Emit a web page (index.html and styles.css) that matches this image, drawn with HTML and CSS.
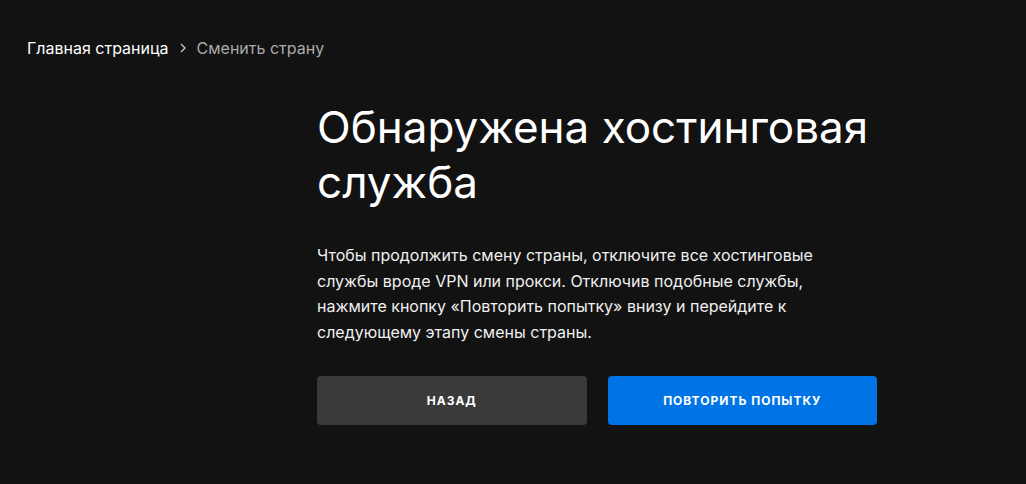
FILE: index.html
```html
<!DOCTYPE html>
<html lang="ru">
<head>
    <meta charset="UTF-8">
    <meta name="viewport" content="width=device-width, initial-scale=1.0">
    <title>Сменить страну</title>
    <link rel="stylesheet" href="styles.css">
</head>
<body>
    <nav class="breadcrumbs">
        <a href="#" class="crumb">Главная страница</a>
        <svg class="chevron" width="12" height="12" viewBox="0 0 12 12"><path d="M4 2 L8 6 L4 10" fill="none" stroke="#ccc" stroke-width="1.3"/></svg>
        <span class="crumb current">Сменить страну</span>
    </nav>

    <div class="content">
        <h1>Обнаружена хостинговая служба</h1>
        <p>Чтобы продолжить смену страны, отключите все хостинговые службы вроде VPN или прокси. Отключив подобные службы, нажмите кнопку «Повторить попытку» внизу и перейдите к следующему этапу смены страны.</p>
        <div class="actions">
            <button class="btn btn-back">Назад</button>
            <button class="btn btn-retry">Повторить попытку</button>
        </div>
    </div>
</body>
</html>
```

FILE: styles.css
```css
body {
    font-family: 'Inter', 'Noto Sans', sans-serif;
    margin: 0;
    background-color: #121212;
    color: white;
}
.breadcrumbs {
    display: flex;
    align-items: center;
    gap: 8px;
    padding: 37px 27px 0;
    font-size: 16px;
    line-height: 22px;
}
.crumb {
    color: white;
    text-decoration: none;
}
.crumb.current {
    color: #aaaaaa;
}
.content {
    width: 560px;
    margin-left: 317px;
    padding-top: 41px;
}
.content h1 {
    font-size: 44px;
    font-weight: 400;
    line-height: 55px;
    margin: 0 0 33px;
    max-width: 560px;
}
.content p {
    font-size: 16px;
    line-height: 25.6px;
    color: #f0f0f0;
    margin: 0 0 31px;
    max-width: 520px;
}
.actions {
    display: flex;
    gap: 21px;
}
.btn {
    flex: 1;
    height: 49px;
    border: none;
    border-radius: 4px;
    color: white;
    font-family: inherit;
    font-size: 12px;
    font-weight: 700;
    letter-spacing: 1px;
    text-transform: uppercase;
    cursor: pointer;
}
.btn-back {
    background: #3a3a3a;
}
.btn-retry {
    background: #0074e4;
}
```
